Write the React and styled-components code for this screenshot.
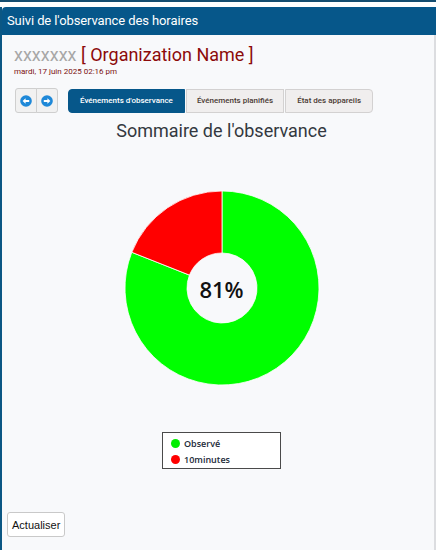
import React from "react";
import styled, { createGlobalStyle } from "styled-components";

const Global = createGlobalStyle`
  html, body { margin: 0; padding: 0; background: #ffffff; }
  body { font-family: Roboto, "Liberation Sans", Arial, sans-serif; }
  * { box-sizing: border-box; }
`;

const Page = styled.div`
  width: 436px;
  height: 550px;
  overflow: hidden;
  border-top: 2px solid #144d70;
  padding-top: 5px;
  display: flex;
  flex-direction: column;
`;

const Panel = styled.div`
  flex: 1;
  display: flex;
  flex-direction: column;
  border-left: 2px solid #0b5784;
`;

const Header = styled.div`
  height: 28px;
  background: #06578a;
  border-top-left-radius: 4px;
  color: #ffffff;
  font-size: 13px;
  line-height: 28px;
  padding-left: 5px;
  letter-spacing: -0.1px;
`;

const Body = styled.div`
  flex: 1;
  background: #f8f9fb;
  border-right: 2px solid #dcdde0;
  padding: 8px 0 0 12px;
  display: flex;
  flex-direction: column;
`;

const OrgTitle = styled.div`
  font-size: 18px;
  line-height: 24px;
  color: #8c0a0a;
  white-space: nowrap;
`;

const Placeholder = styled.span`
  color: #a7a7a7;
`;

const DateLine = styled.div`
  font-size: 8px;
  line-height: 10px;
  color: #7a1010;
`;

const Toolbar = styled.div`
  margin-top: 11px;
  display: flex;
  align-items: center;
  gap: 10px;
  padding-left: 1px;
`;

const NavGroup = styled.div`
  display: flex;
`;

const NavButton = styled.button`
  width: 22px;
  height: 25px;
  padding: 0;
  margin: 0;
  border: 1px solid #cfcfcf;
  background: #f1f1f1;
  display: flex;
  align-items: center;
  justify-content: center;
  border-radius: ${(p) => (p.$first ? "3px 0 0 3px" : "0 3px 3px 0")};
  margin-left: ${(p) => (p.$first ? "0" : "-1px")};
`;

const Tabs = styled.div`
  display: flex;
  gap: 1px;
`;

const Tab = styled.div`
  height: 24px;
  padding: 0 ${(p) => p.$pad}px;
  display: flex;
  align-items: center;
  font-size: 8px;
  font-weight: 500;
  white-space: nowrap;
  color: ${(p) => (p.$active ? "#ffffff" : "#4a3a34")};
  background: ${(p) => (p.$active ? "#06578a" : "#f0eeee")};
  border: 1px solid ${(p) => (p.$active ? "#06578a" : "#d3d1d1")};
  border-radius: ${(p) => p.$radius};
`;

const Content = styled.div`
  display: flex;
  flex-direction: column;
  align-items: center;
  width: 415px;
`;

const SectionTitle = styled.div`
  margin-top: 6px;
  font-size: 18px;
  line-height: 24px;
  color: #333840;
  font-weight: 400;
`;

const ChartWrap = styled.div`
  position: relative;
  margin-top: 47px;
  width: 196px;
  height: 196px;
`;

const Percent = styled.div`
  position: absolute;
  inset: 0;
  display: flex;
  align-items: center;
  justify-content: center;
  font-family: "Open Sans", "Noto Sans", sans-serif;
  font-size: 22px;
  font-weight: 600;
  color: #111111;
  padding-top: 1px;
`;

const Legend = styled.div`
  margin-top: 46px;
  width: 119px;
  height: 37px;
  border: 1px solid #4a4a4a;
  background: #ffffff;
  padding: 3px 0 0 8px;
  display: flex;
  flex-direction: column;
  gap: 2px;
`;

const LegendItem = styled.div`
  display: flex;
  align-items: center;
  gap: 4px;
  height: 14px;
  font-family: "Open Sans", "Noto Sans", sans-serif;
  font-size: 9px;
  font-weight: 600;
  color: #222a38;
`;

const Dot = styled.span`
  width: 9px;
  height: 9px;
  border-radius: 50%;
  background: ${(p) => p.$color};
`;

const Footer = styled.div`
  margin-top: 43px;
  margin-left: -7px;
`;

const RefreshButton = styled.button`
  height: 25px;
  padding: 0 4px;
  font-family: "Liberation Sans", Arial, sans-serif;
  font-size: 11px;
  color: #111;
  background: #ffffff;
  border: 1px solid #c9c9c9;
  border-radius: 3px;
`;

const ArrowIcon = ({ dir }) => (
  <svg width="12" height="12" viewBox="0 0 12 12">
    <circle cx="6" cy="6" r="5.8" fill="#1e88d8" />
    {dir === "left" ? (
      <path d="M2.6 6 L5.6 3.2 V4.9 H9.2 V7.1 H5.6 V8.8 Z" fill="#ffffff" />
    ) : (
      <path d="M9.4 6 L6.4 3.2 V4.9 H2.8 V7.1 H6.4 V8.8 Z" fill="#ffffff" />
    )}
  </svg>
);

function arcPath(cx, cy, R, r, a0, a1) {
  const rad = (a) => ((a - 90) * Math.PI) / 180;
  const p = (rr, a) => [cx + rr * Math.cos(rad(a)), cy + rr * Math.sin(rad(a))];
  const large = a1 - a0 > 180 ? 1 : 0;
  const [x0, y0] = p(R, a0);
  const [x1, y1] = p(R, a1);
  const [x2, y2] = p(r, a1);
  const [x3, y3] = p(r, a0);
  return `M${x0} ${y0} A${R} ${R} 0 ${large} 1 ${x1} ${y1} L${x2} ${y2} A${r} ${r} 0 ${large} 0 ${x3} ${y3} Z`;
}

const Donut = ({ value }) => {
  const split = (value / 100) * 360;
  return (
    <svg width="196" height="196" viewBox="0 0 196 196">
      <path d={arcPath(98, 98, 97, 35, 0, split)} fill="#00ff00" stroke="#ffffff" strokeWidth="0.8" />
      <path d={arcPath(98, 98, 97, 35, split, 360)} fill="#ff0000" stroke="#ffffff" strokeWidth="0.8" />
    </svg>
  );
};

export default function App() {
  return (
    <>
      <Global />
      <Page>
        <Panel>
          <Header>Suivi de l'observance des horaires</Header>
          <Body>
            <OrgTitle>
              <Placeholder>xxxxxxx</Placeholder> [ Organization Name ]
            </OrgTitle>
            <DateLine>mardi, 17 juin 2025 02:16 pm</DateLine>
            <Toolbar>
              <NavGroup>
                <NavButton $first>
                  <ArrowIcon dir="left" />
                </NavButton>
                <NavButton>
                  <ArrowIcon dir="right" />
                </NavButton>
              </NavGroup>
              <Tabs>
                <Tab $active $pad={11} $radius="4px 0 0 4px">Événements d'observance</Tab>
                <Tab $pad={10} $radius="0">Événements planifiés</Tab>
                <Tab $pad={11} $radius="0 4px 4px 0">État des appareils</Tab>
              </Tabs>
            </Toolbar>
            <Content>
              <SectionTitle>Sommaire de l'observance</SectionTitle>
              <ChartWrap>
                <Donut value={81} />
                <Percent>81%</Percent>
              </ChartWrap>
              <Legend>
                <LegendItem>
                  <Dot $color="#00ee00" />
                  Observé
                </LegendItem>
                <LegendItem>
                  <Dot $color="#ff0000" />
                  10minutes
                </LegendItem>
              </Legend>
            </Content>
            <Footer>
              <RefreshButton>Actualiser</RefreshButton>
            </Footer>
          </Body>
        </Panel>
      </Page>
    </>
  );
}
